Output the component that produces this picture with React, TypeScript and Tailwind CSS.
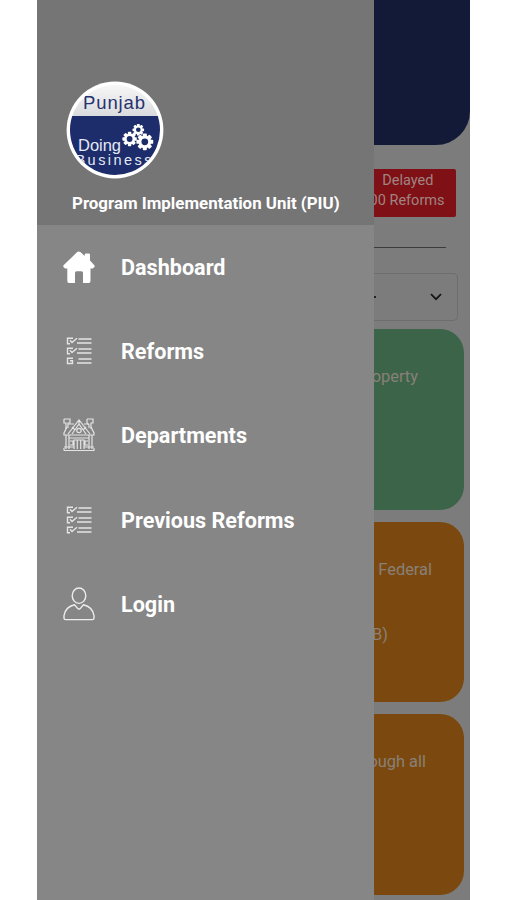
import type { ReactNode } from 'react';

interface MenuItem {
  label: string;
  icon: ReactNode;
}

function Gear({ x, y, r }: { x: number; y: number; r: number }) {
  return (
    <g transform={`translate(${x} ${y}) scale(${r})`}>
      {[0, 45, 90, 135].map((angle) => (
        <rect key={angle} x="-0.24" y="-1" width="0.48" height="2" rx="0.1" fill="#fff" transform={`rotate(${angle})`} />
      ))}
      <circle r="0.76" fill="#fff" />
      <circle r="0.4" fill="#1d2d6b" />
    </g>
  );
}

function BrandLogo() {
  return (
    <svg viewBox="0 0 98 98" className="block h-[98px] w-[98px]">
      <defs>
        <clipPath id="disc">
          <circle cx="49" cy="49" r="45" />
        </clipPath>
        <linearGradient id="sky" x1="0" y1="0" x2="0" y2="1">
          <stop offset="0" stopColor="#fafafa" />
          <stop offset="1" stopColor="#d9dadd" />
        </linearGradient>
      </defs>
      <circle cx="49" cy="49" r="48.4" fill="#fff" />
      <g clipPath="url(#disc)">
        <rect width="98" height="36" fill="url(#sky)" />
        <rect y="35" width="98" height="63" fill="#1d2d6b" />
        <g fontFamily="Liberation Sans, sans-serif">
          <text x="17" y="27.5" fontSize="18.5" fill="#26326f" textLength="62">Punjab</text>
          <text x="12" y="70" fontSize="16.5" fill="#e4e8f4" textLength="43">Doing</text>
          <text x="9.5" y="84" fontSize="14.5" fill="#e4e8f4" textLength="76">Business</text>
        </g>
        <Gear x={72.3} y={48.8} r={5.8} />
        <Gear x={63.6} y={58} r={7.2} />
        <Gear x={78.8} y={60.8} r={8.4} />
      </g>
    </svg>
  );
}

function HomeIcon() {
  return (
    <svg viewBox="0 0 32 32" className="h-8 w-8" fill="#fff">
      <path d="M14.2 1.1Q15.8-.3 17.4 1.1L21.7 5V3.6Q21.7 2.4 23 2.4H25.7Q27 2.4 27 3.6V9.5L31.3 14.2Q32.2 15.5 30.7 16.8L29.6 17.6H27.5V30Q27.5 32 25.7 32H20V21.8Q20 20.2 18.5 20.2H13.5Q12 20.2 12 21.8V32H6Q4.3 32 4.3 30V17.6H2.2L.9 16.6Q-.3 15.4.8 14.1Z" />
    </svg>
  );
}

function ChecklistIcon({ lastOpen = false }: { lastOpen?: boolean }) {
  return (
    <svg viewBox="0 0 26 28" className="h-7 w-[26px]" fill="none" stroke="#e4e4e4" strokeWidth="1.4">
      {[1, 11, 21].map((y, i) => (
        <g key={y} transform={`translate(0 ${y})`}>
          {lastOpen && i === 2 ? (
            <path d="M7 .2H1.5V5.5H6.5V2.8H4" />
          ) : (
            <path d="M7 .2H1.5V5.7H4M4 2.3L6 4.6L11 .2" />
          )}
          <path d="M12.5 1H25.5M11 5H25.5" />
        </g>
      ))}
    </svg>
  );
}

function BuildingIcon() {
  return (
    <svg viewBox="0 0 32 34" className="h-[34px] w-8" fill="none" stroke="#e4e4e4" strokeWidth="1.2">
      <path d="M1 1H7V5H5V10M1 1V5H3V11M24 1H30V5H28V11M24 1V5L26 7V10" />
      <path d="M5 6H11M21 6H26M4 9L1 15V17H31V15L28 9" />
      <path d="M5 16L16 2L27 16M9 16L16 6L23 16M16 2V6M9 9L12 12M23 9L20 12" />
      <circle cx="16" cy="12.5" r="2.2" />
      <path d="M3 17V31M6 17V31M26 17V31M29 17V31M6 20H26" />
      <path d="M11 31V22H21V31M14.3 22V31M17.7 22V31M7 23H10V27H7M25 23H22V27H25" />
      <path d="M1 29H11M21 29H31M1 32.5H31V30M1 32.5V30" />
    </svg>
  );
}

function UserIcon() {
  return (
    <svg viewBox="0 0 32 34" className="h-[34px] w-8" fill="none" stroke="#ededed" strokeWidth="1.4" strokeLinejoin="round">
      <ellipse cx="16" cy="8.7" rx="6.8" ry="7.7" />
      <path d="M11.5 17.7C6 19 2 22.5 1 28.5V31Q1 32.6 2.6 32.6H29.4Q31 32.6 31 31V28.5C30 22.5 26 19 20.5 17.7L17.2 21.6Q16 22.7 14.8 21.6Z" />
    </svg>
  );
}

const menuItems: MenuItem[] = [
  { label: 'Dashboard', icon: <HomeIcon /> },
  { label: 'Reforms', icon: <ChecklistIcon lastOpen /> },
  { label: 'Departments', icon: <BuildingIcon /> },
  { label: 'Previous Reforms', icon: <ChecklistIcon /> },
  { label: 'Login', icon: <UserIcon /> },
];

function Drawer() {
  return (
    <aside className="h-full w-[337px] shrink-0 bg-[#868686]">
      <div className="h-[224.5px] bg-[#757575] pt-[81px] pl-[29px]">
        <BrandLogo />
        <p className="mt-[12px] ml-[6px] text-[16.9px] leading-6 font-bold whitespace-nowrap text-white">
          Program Implementation Unit (PIU)
        </p>
      </div>
      <nav className="pt-[0.5px]">
        {menuItems.map((item) => (
          <a key={item.label} className="flex h-[84.2px] items-center">
            <span className="ml-[26px] flex w-8 justify-center">{item.icon}</span>
            <span className="mt-[2px] ml-[26px] text-[21.6px] leading-6 font-bold text-white">{item.label}</span>
          </a>
        ))}
      </nav>
    </aside>
  );
}

function ReformCard({ color, children }: { color: string; children: ReactNode }) {
  return (
    <div className={`mr-[6px] mb-3 h-[180.5px] rounded-r-[24px] pt-[37px] text-[16.4px] leading-[22px] whitespace-nowrap text-[#898078] ${color}`}>
      {children}
    </div>
  );
}

function Dashboard() {
  return (
    <main className="h-full min-w-0 flex-1 overflow-hidden bg-[#7c7c7c]">
      <div className="h-[145px] rounded-br-[34px] bg-[#131a37]" />
      <div className="mt-6 mr-[14.5px] flex h-12 flex-col items-end rounded-r-[2px] bg-[#7f1015] pt-[2px] text-[14.5px] leading-[19.5px] whitespace-nowrap text-[#a08482]">
        <span className="mr-[22px]">Delayed</span>
        <span className="mr-[11px]">00 Reforms</span>
      </div>
      <div className="mt-[30px] mr-[24px] h-px bg-[#3c3c3c]" />
      <div className="mt-[25px] mr-[12px] flex h-12 items-center justify-between rounded-r-[5px] border border-l-0 border-[#6d6d6d]">
        <span className="h-[2px] w-[2px] bg-[#222]" />
        <svg viewBox="0 0 12 8" className="mr-[15px] h-2 w-3" fill="none" stroke="#151515" strokeWidth="1.7">
          <path d="M1 1.2L6 6.2L11 1.2" />
        </svg>
      </div>
      <div className="mt-2">
        <ReformCard color="bg-[#3b6449]">
          <p className="mr-[46px] flex justify-end">Property</p>
        </ReformCard>
        <ReformCard color="bg-[#7b490f]">
          <p className="mr-[32px] flex justify-end">Federal</p>
          <p className="mt-[43px] mr-[76px] flex justify-end">(FPB)</p>
        </ReformCard>
        <ReformCard color="bg-[#7b490f]">
          <p className="mr-[38px] flex justify-end">through all</p>
        </ReformCard>
      </div>
    </main>
  );
}

export default function App() {
  return (
    <div className="h-[900px] w-[507px] overflow-hidden bg-white pl-[37px] font-['Roboto',sans-serif]">
      <div className="flex h-full w-[433px]">
        <Drawer />
        <Dashboard />
      </div>
    </div>
  );
}
